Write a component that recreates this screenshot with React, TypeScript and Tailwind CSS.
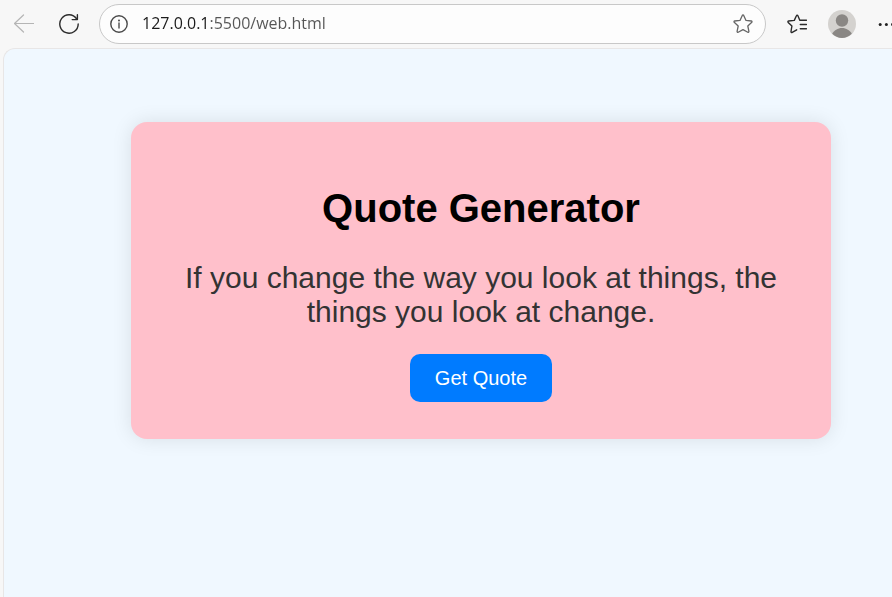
import { useState } from "react";

const QUOTES = [
  "If you change the way you look at things, the things you look at change.",
  "The only way to do great work is to love what you do.",
  "What you do today can improve all your tomorrows.",
];

const STAR =
  "M9.3 1.400c.3-.6 1.100-.6 1.400 0l2.300 5 5.300.6c.7.1.9.8.5 1.300l-4 3.700 1.100 5.400c.1.700-.5 1.100-1.100.8L10 15.600l-4.800 2.600c-.6.3-1.200-.1-1.100-.8l1.100-5.400-4-3.700c-.4-.5-.2-1.200.5-1.300L7 6.400z";

function Toolbar() {
  return (
    <header className="flex h-12 shrink-0 items-center overflow-hidden pl-3.5">
      <button type="button" aria-label="Back" className="mr-[25px] shrink-0 text-[#b5b5b5]">
        <svg className="block size-5" viewBox="0 0 20 20" fill="none" stroke="currentColor" strokeWidth="1.2" strokeLinecap="round" strokeLinejoin="round">
          <path d="M19.5 9.5H.5M9.5 1 .5 9.5l9 8.5" />
        </svg>
      </button>
      <button type="button" aria-label="Refresh" className="mr-5 shrink-0 text-[#2b2b2b]">
        <svg className="block size-5" viewBox="0 0 20 20" fill="none" stroke="currentColor" strokeWidth="1.4" strokeLinecap="round" strokeLinejoin="round">
          <path d="M19.2 10A9.2 9.2 0 1 1 17.6 4.8M18.4.7v4.900h-5.200" />
        </svg>
      </button>
      <div className="flex h-10 min-w-0 flex-1 items-center rounded-full border border-[#c8c8c8] bg-[#fdfdfd] px-2.5">
        <button type="button" aria-label="View site information" className="mr-3.5 shrink-0 text-[#4a4a4a]">
          <svg className="block size-[18px]" viewBox="0 0 18 18" fill="none" stroke="currentColor" strokeWidth="1.4">
            <circle cx="9" cy="9" r="8.2" />
            <path d="M9 8v5" strokeLinecap="round" />
            <circle cx="9" cy="5.4" r="1" fill="currentColor" stroke="none" />
          </svg>
        </button>
        <input
          aria-label="Address"
          defaultValue="127.0.0.1:5500/web.html"
          className="h-8 min-w-0 flex-1 bg-[linear-gradient(to_right,#1b1b1b_67px,#555555_67px)] bg-clip-text pb-0.5 font-['Segoe_UI','Open_Sans',sans-serif] text-base text-transparent caret-black outline-none"
        />
        <button type="button" aria-label="Add to favorites" className="mx-0.5 shrink-0 text-[#666666]">
          <svg className="block size-5" viewBox="0 0 20 20" fill="none" stroke="currentColor" strokeWidth="1.3" strokeLinejoin="round">
            <path d={STAR} />
          </svg>
        </button>
      </div>
      <button type="button" aria-label="Favorites" className="ml-[21px] shrink-0 text-[#2b2b2b]">
        <svg className="block size-5" viewBox="0 0 20 20" fill="none" stroke="currentColor" strokeWidth="1.4" strokeLinecap="round" strokeLinejoin="round">
          <path d="M12.8 6.200 10.900 1.800c-.3-.7-1.200-.7-1.500 0L7.300 6.400l-5.600.6c-.8.1-1 .9-.5 1.400l3.700 3.600-.9 5.500c-.1.800.6 1.200 1.200.9l4.500-2.600M12.800 6.200H19.500M13.300 10.500h6.200M13.300 14.800h6.200" />
        </svg>
      </button>
      <button type="button" aria-label="Profile" className="ml-[21px] shrink-0">
        <svg className="block size-7" viewBox="0 0 28 28">
          <circle cx="14" cy="14" r="14" fill="#d4d2cf" />
          <circle cx="14" cy="10.5" r="6.2" fill="#8a8784" />
          <path d="M4.200 23.800C6 20.500 9.700 18 14 18s8 2.500 9.800 5.800A14 14 0 0 1 14 28a14 14 0 0 1-9.800-4.200z" fill="#8a8784" />
        </svg>
      </button>
      <button type="button" aria-label="Settings and more" className="ml-5 w-4 shrink-0 overflow-hidden text-[#222222]">
        <svg className="block h-5 w-[18px]" viewBox="0 0 18 20" fill="currentColor">
          <circle cx="4.200" cy="10.500" r="1.500" />
          <circle cx="10.400" cy="10.500" r="1.500" />
          <circle cx="16.600" cy="10.500" r="1.500" />
        </svg>
      </button>
    </header>
  );
}

export default function App() {
  const [index, setIndex] = useState(0);

  return (
    <div className="flex min-h-screen flex-col bg-[#f7f7f7]">
      <Toolbar />
      <main className="ml-[3px] flex-1 rounded-tl-xl border-t border-l border-[#e8e6e6] bg-[#f0f8ff] pt-[73px] pr-[61px] pb-10 pl-[127px] font-['Liberation_Sans',Arial,sans-serif]">
        <section className="rounded-2xl bg-[#ffc0cb] px-[38px] pt-[63px] pb-[37px] text-center shadow-[0_0_20px_rgba(0,0,0,0.1)]">
          <h1 className="text-[40px] leading-[46px] font-bold text-black">Quote Generator</h1>
          <p className="mt-[30px] text-[30px] leading-[34px] text-[#333333]">{QUOTES[index]}</p>
          <button
            type="button"
            onClick={() => setIndex((index + 1) % QUOTES.length)}
            className="mt-[25px] h-12 rounded-[10px] bg-[#007bff] px-[25px] text-xl leading-6 text-white"
          >
            Get Quote
          </button>
        </section>
      </main>
    </div>
  );
}
